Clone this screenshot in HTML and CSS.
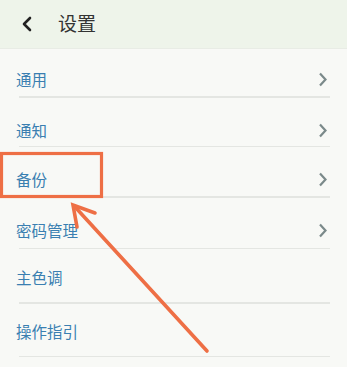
FILE: index.html
```html
<!DOCTYPE html>
<html lang="zh">
<head>
<meta charset="utf-8">
<link rel="stylesheet" href="styles.css">
</head>
<body>
<div class="page">
  <header class="topbar">
    <svg class="back" width="12" height="16" viewBox="0 0 12 16"><path d="M9 2 L3 8 L9 14" fill="none" stroke="#222" stroke-width="2.6" stroke-linecap="round" stroke-linejoin="round"/></svg>
    <span class="title">设置</span>
  </header>
  <ul class="list">
    <li class="row r1"><span class="label">通用</span><svg class="chev" width="10" height="15" viewBox="0 0 10 15"><path d="M2 1.5 L7.5 7.5 L2 13.5" fill="none" stroke="#7b8a8a" stroke-width="2.2"/></svg></li>
    <li class="divider"></li>
    <li class="row r2"><span class="label">通知</span><svg class="chev" width="10" height="15" viewBox="0 0 10 15"><path d="M2 1.5 L7.5 7.5 L2 13.5" fill="none" stroke="#7b8a8a" stroke-width="2.2"/></svg></li>
    <li class="divider"></li>
    <li class="row r3"><span class="label">备份</span><svg class="chev" width="10" height="15" viewBox="0 0 10 15"><path d="M2 1.5 L7.5 7.5 L2 13.5" fill="none" stroke="#7b8a8a" stroke-width="2.2"/></svg></li>
    <li class="divider"></li>
    <li class="row r4"><span class="label">密码管理</span><svg class="chev" width="10" height="15" viewBox="0 0 10 15"><path d="M2 1.5 L7.5 7.5 L2 13.5" fill="none" stroke="#7b8a8a" stroke-width="2.2"/></svg></li>
    <li class="divider"></li>
    <li class="row r5"><span class="label">主色调</span></li>
    <li class="divider"></li>
    <li class="row r6"><span class="label">操作指引</span></li>
    <li class="divider"></li>
  </ul>
  <svg class="annot" width="347" height="367" viewBox="0 0 347 367">
    <rect x="1.5" y="153.5" width="100" height="43" fill="none" stroke="#ee6f45" stroke-width="3.2"/>
    <line x1="207" y1="351" x2="76" y2="208" stroke="#ee6f45" stroke-width="3.6" stroke-linecap="round"/>
    <path d="M95 213 L73 205 L77 227" fill="none" stroke="#ee6f45" stroke-width="3.6" stroke-linecap="round" stroke-linejoin="miter"/>
  </svg>
</div>
</body>
</html>
```
FILE: styles.css
```css
* { box-sizing: border-box; }
html, body { margin: 0; padding: 0; }
body {
  width: 347px;
  height: 367px;
  overflow: hidden;
  background: #f8f9f6;
  font-family: "Noto Sans CJK SC", "Noto Sans", sans-serif;
}
.page { position: relative; width: 347px; height: 367px; }
.topbar {
  height: 49px;
  background: #eef4ea;
  border-bottom: 1px solid #e8ece5;
  display: flex;
  align-items: center;
  padding-left: 21px;
}
.back { display: block; }
.title {
  margin-left: 25px;
  font-size: 19px;
  line-height: 24px;
  color: #333;
  margin-top: -2px;
}
.list { list-style: none; margin: 0; padding: 0; }
.row {
  display: flex;
  align-items: flex-end;
  justify-content: space-between;
  padding: 0 19px 0 16px;
}
.label {
  font-size: 15.5px;
  line-height: 20px;
  color: #3a7fb1;
}
.chev { display: block; margin-bottom: 2px; }
.r1 { height: 47px; padding-bottom: 7px; }
.r2 { height: 48px; padding-bottom: 6px; }
.r3 { height: 49px; padding-bottom: 7px; }
.r4 { height: 50px; padding-bottom: 8px; }
.r5 { height: 53px; padding-bottom: 15px; }
.r6 { height: 52px; padding-bottom: 15px; }
.divider {
  height: 1.5px;
  margin: 0 17px 0 19px;
  background: #e4e6e2;
}
.annot { position: absolute; left: 0; top: 0; pointer-events: none; }
```
